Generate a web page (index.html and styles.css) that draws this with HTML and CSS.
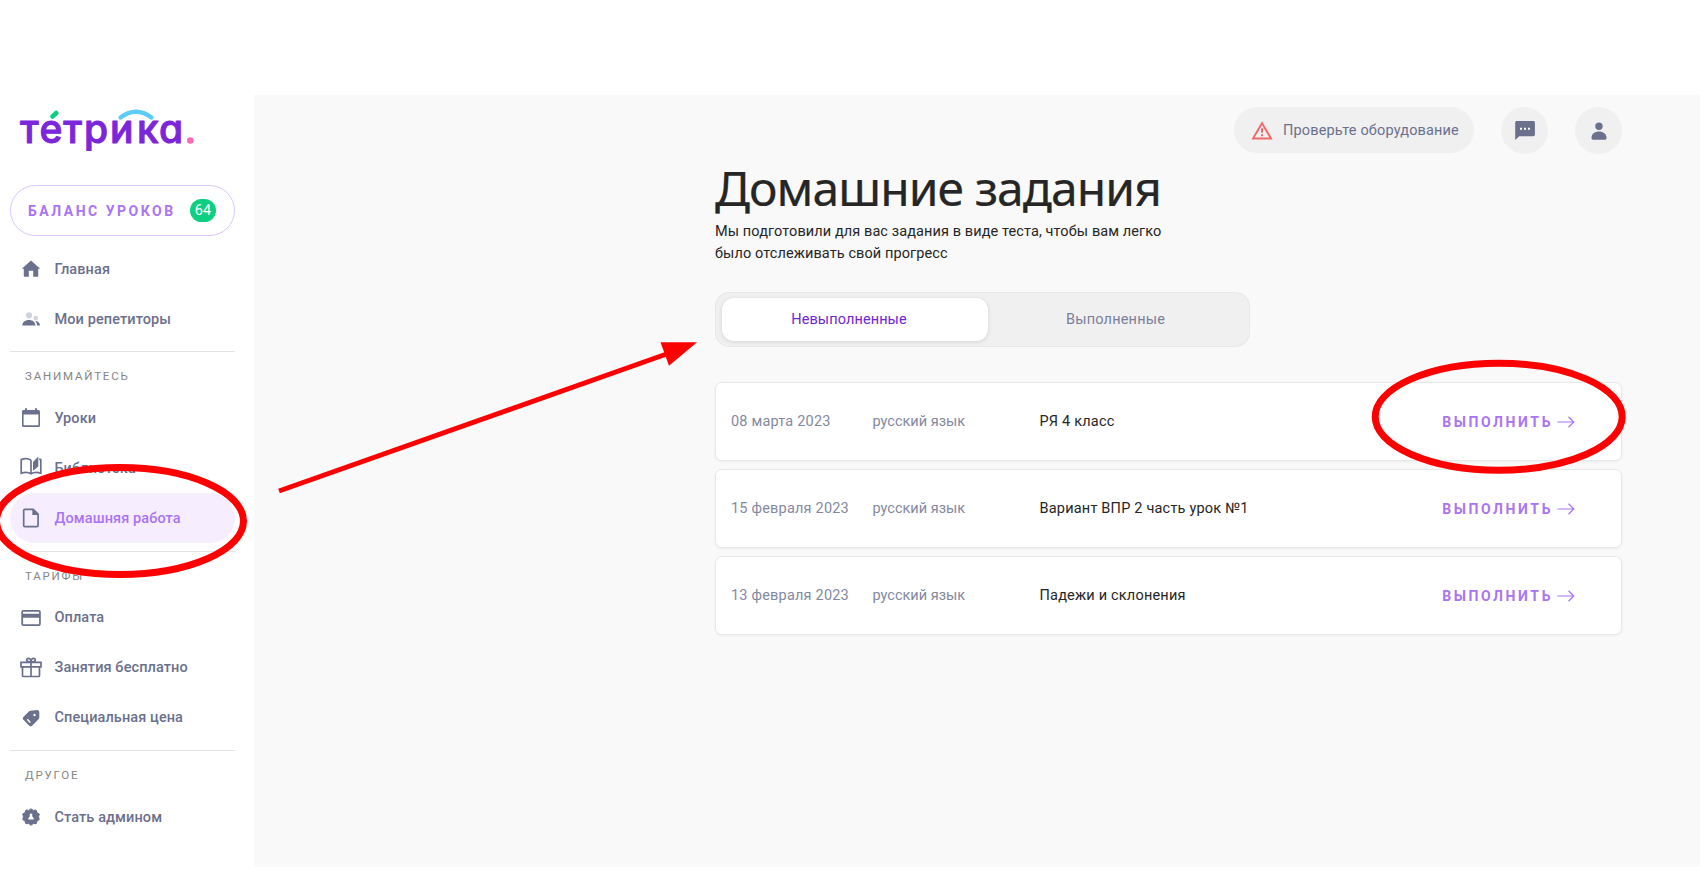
FILE: index.html
```html
<!DOCTYPE html>
<html lang="ru">
<head>
  <meta charset="UTF-8">
  <title>Домашние задания</title>
  <link rel="stylesheet" href="styles.css">
</head>
<body>
  <div class="layout">
    <aside class="sidebar">
      <a class="logo" href="#">
        <svg width="180" height="50" viewBox="0 0 180 50">
          <text class="logo-text" x="0 19.500 43.300 64 90 117 139" y="38">тетрика</text>
          <path d="M32.500 11.500l3.800-3.500" stroke="#0ccf82" stroke-width="4.600"/>
          <path d="M100.500 12.500q15.500-11.500 31 0" stroke="#5bcbf8" stroke-width="4.200"/>
          <circle cx="170.300" cy="35.500" r="3.300" fill="#ff68b7"/>
        </svg>
      </a>

      <a class="balance" href="#">
        <span class="balance-text">Баланс уроков</span>
        <span class="badge">64</span>
      </a>

      <nav>
        <a class="item" href="#">
          <svg class="icon" viewBox="0 0 24 24"><path d="M12 3.500L21.200 11.700h-2v7.200a.8.8 0 0 1-.8.8h-4.200v-6H9.800v6H5.600a.8.8 0 0 1-.8-.8v-7.200h-2z"/></svg>
          <span>Главная</span>
        </a>
        <a class="item" href="#">
          <svg class="icon" viewBox="0 0 24 24"><g opacity=".3"><circle cx="10" cy="8.300" r="3.100"/><circle cx="16.700" cy="11" r="2.300"/></g><path d="M3.300 18.500c0-3.500 3-5.600 6.600-5.600s6.600 2.100 6.600 5.600zM16 13.800c3 .2 4.900 2 5 4.700h-3c0-2-.6-3.500-2-4.700z"/></svg>
          <span>Мои репетиторы</span>
        </a>

        <div class="section">
          <div class="heading">Занимайтесь</div>
          <a class="item" href="#">
            <svg class="icon" viewBox="0 0 24 24"><path d="M6 2.300h2v1.600h8V2.300h2v1.600h1.500a1.500 1.500 0 0 1 1.500 1.500v14a1.500 1.500 0 0 1-1.500 1.500h-15A1.500 1.500 0 0 1 3 19.400v-14a1.500 1.500 0 0 1 1.500-1.500H6zM4.600 8.400v10.900h14.800V8.400z"/></svg>
            <span>Уроки</span>
          </a>
          <a class="item" href="#">
            <svg class="icon line book" viewBox="0 0 24 24"><path d="M12 5.200C9.500 3.400 5.500 3.200 2.200 4.600v13.700c3.300-1.300 7.200-1.200 9.800.5 2.600-1.700 6.500-1.800 9.800-.5V4.600l-1.600-.5M12 5.200v13.600"/><path class="solid" d="M14 7.100l5.300-5.600v10L14 15.800z"/></svg>
            <span>Библиотека</span>
          </a>
          <a class="item active" href="#">
            <svg class="icon line" viewBox="0 0 24 24"><path d="M5.900 3.300h8.300l4.900 4.900v11.300c0 .7-.5 1.200-1.200 1.200h-12c-.7 0-1.200-.5-1.200-1.200v-15c0-.7.5-1.200 1.200-1.200z"/><path class="solid" d="M13.300 3v6h6z"/></svg>
            <span>Домашняя работа</span>
          </a>
        </div>

        <div class="section">
          <div class="heading">Тарифы</div>
          <a class="item" href="#">
            <svg class="icon" viewBox="0 0 24 24"><path d="M4.300 4h15.500a2 2 0 0 1 2 2v12a2 2 0 0 1-2 2H4.300a2 2 0 0 1-2-2V6a2 2 0 0 1 2-2zm-.2 1.700v2.100h16V5.700zm0 6v6.600h16v-6.600z"/></svg>
            <span>Оплата</span>
          </a>
          <a class="item" href="#">
            <svg class="icon line" viewBox="0 0 24 24"><path d="M2 6.300h20v4.500H2zM3.500 10.800v8.700c0 .6.400 1 1 1h15c.6 0 1-.4 1-1v-8.700M12 6.300v14.200M12 6C9.500 6 7.700 5.300 7.700 4c0-1.100.7-1.700 1.600-1.700C11 2.300 12 4 12 6zM12 6c2.500 0 4.300-.7 4.300-2 0-1.100-.7-1.700-1.600-1.700C13 2.300 12 4 12 6z"/></svg>
            <span>Занятия бесплатно</span>
          </a>
          <a class="item" href="#">
            <svg class="icon" viewBox="0 0 24 24"><path d="M11.400 4.700l6.700-.6c1.300 0 2.200.8 2.200 2.100v5.300c0 .6-.2 1.100-.6 1.500l-6.600 6.700c-.8.800-2 .8-2.800 0l-5.900-5.900c-.8-.8-.8-2 0-2.800l5.500-5.600c.4-.4.900-.7 1.500-.7z"/><circle cx="15.500" cy="9" r="1.200" fill="#fff"/><path d="M8.300 13.200l3 3.200" stroke="#fff" stroke-width="1.500"/></svg>
            <span>Специальная цена</span>
          </a>
        </div>

        <div class="section">
          <div class="heading">Другое</div>
          <a class="item" href="#">
            <svg class="icon" viewBox="0 0 24 24"><path d="M12 3.800l2.300 1.600 2.700-.4.900 2.600 2.400 1.400-.8 2.900.8 2.600-2.300 1.500-.8 2.700-2.900-.2L12 20.300l-2.300-1.800-2.900.2-.8-2.700-2.300-1.500.8-2.600-.8-2.900 2.400-1.400L7 5l2.700.4z" stroke="#6b708d" stroke-linejoin="round"/><path d="M12 8.500a1.400 1.400 0 0 1 1 2.400l1.700 2.400v1.300H9.300v-1.300l1.700-2.400a1.400 1.400 0 0 1 1-2.400z" fill="#fff"/></svg>
            <span>Стать админом</span>
          </a>
        </div>
      </nav>
    </aside>

    <main class="main">
      <header class="topbar">
        <a class="check" href="#">
          <svg class="warn" width="22" height="22" viewBox="0 0 22 22"><path d="M11 4.200L20 19.500H2z" fill="none" stroke="#ee6a6a" stroke-width="1.900"/><path d="M11 9.200v4.600M11 15.300v2" stroke="#ee6a6a" stroke-width="2"/></svg>
          <span>Проверьте оборудование</span>
        </a>
        <a class="round" href="#">
          <svg class="icon" viewBox="0 0 24 24"><path d="M3.700 2h16.600c1 0 1.600.6 1.600 1.600v12c0 1-.6 1.600-1.600 1.600H6.200L2.200 21V3.600C2.200 2.600 2.800 2 3.700 2z"/><path d="M7 8.800h2v2H7zM11 8.800h2v2h-2zM15 8.800h2v2h-2z" fill="#fff"/></svg>
        </a>
        <a class="round" href="#">
          <svg class="icon" viewBox="0 0 24 24"><circle cx="12" cy="7.200" r="3.700"/><path d="M4.500 19.100c0-4.300 3.300-6.600 7.500-6.600s7.500 2.300 7.500 6.600c0 1-.6 1.700-1.500 1.700H6c-.9 0-1.500-.7-1.500-1.700z"/></svg>
        </a>
      </header>

      <div class="content">
        <h1>Домашние задания</h1>
        <p class="lead">Мы подготовили для вас задания в виде теста, чтобы вам легко<br>было отслеживать свой прогресс</p>

        <div class="tabs">
          <button class="tab tab-active"><span>Невыполненные</span></button>
          <button class="tab"><span>Выполненные</span></button>
        </div>

        <div class="cards">
          <div class="card">
            <span class="date">08 марта 2023</span>
            <span class="subject">русский язык</span>
            <span class="name">РЯ 4 класс</span>
            <a class="do" href="#"><span>Выполнить</span><svg width="18" height="14" viewBox="0 0 18 14"><path d="M.5 7h16M11.500 1.800L16.800 7l-5.300 5.200"/></svg></a>
          </div>
          <div class="card">
            <span class="date">15 февраля 2023</span>
            <span class="subject">русский язык</span>
            <span class="name">Вариант ВПР 2 часть урок №1</span>
            <a class="do" href="#"><span>Выполнить</span><svg width="18" height="14" viewBox="0 0 18 14"><path d="M.5 7h16M11.500 1.800L16.800 7l-5.300 5.200"/></svg></a>
          </div>
          <div class="card">
            <span class="date">13 февраля 2023</span>
            <span class="subject">русский язык</span>
            <span class="name">Падежи и склонения</span>
            <a class="do" href="#"><span>Выполнить</span><svg width="18" height="14" viewBox="0 0 18 14"><path d="M.5 7h16M11.500 1.800L16.800 7l-5.300 5.200"/></svg></a>
          </div>
        </div>
      </div>
    </main>
  </div>

  <!-- пометки поверх страницы -->
  <svg class="marks" width="1700" height="879" viewBox="0 0 1700 879">
    <ellipse cx="120" cy="521" rx="123.500" ry="53.500"/>
    <ellipse cx="1498.700" cy="416.700" rx="123.500" ry="53.500"/>
    <path class="shaft" d="M279 491L668 353.500"/>
    <path class="head" d="M660.500 342.300H697L669 365.700z"/>
  </svg>
</body>
</html>
```
FILE: styles.css
```css
* {
  box-sizing: border-box;
}
body {
  margin: 0;
  padding: 95px 0 12px;
  height: 879px;
  overflow: hidden;
  background: #fff;
  font-family: Roboto, "Noto Sans", sans-serif;
  font-size: 14.5px;
  letter-spacing: 0.1px;
  color: #262626;
}
a {
  color: inherit;
  text-decoration: none;
}
.layout {
  display: flex;
  height: 772px;
}
.sidebar {
  width: 254px;
  padding: 0 19px 0 10px;
  background: #fff;
}
.logo {
  display: block;
  height: 90px;
  padding: 10px 0 0 10px;
}
.logo svg {
  display: block;
  overflow: visible;
  fill: none;
  stroke-linecap: round;
}
.logo-text {
  font-family: Inter, sans-serif;
  font-size: 39px;
  font-weight: 500;
  font-feature-settings: "cv11";
  letter-spacing: 0;
  fill: #7b26db;
  stroke: #7b26db;
  stroke-width: 1;
  stroke-linejoin: round;
}
.balance {
  display: flex;
  align-items: center;
  justify-content: space-between;
  height: 51px;
  padding: 0 18px 0 17px;
  border: 1px solid #dcc6fb;
  border-radius: 26px;
  color: #a974f5;
}
.balance-text {
  font-size: 14px;
  font-weight: 700;
  text-transform: uppercase;
  letter-spacing: 2.5px;
}
.badge {
  width: 26px;
  height: 23px;
  border-radius: 12px;
  background: #0ccf82;
  color: #fff;
  font-size: 14.5px;
  line-height: 23px;
  text-align: center;
}
nav {
  padding-top: 8px;
  color: #6b708d;
}
.item {
  display: flex;
  align-items: center;
  gap: 11.5px;
  height: 50px;
  padding-left: 9px;
  border-radius: 25px;
  font-weight: 500;
}
.icon {
  width: 24px;
  height: 24px;
  flex: none;
  fill: #6b708d;
}
.line {
  fill: none;
  stroke: #6b708d;
  stroke-width: 1.7;
}
.book {
  margin-top: -2px;
}
.solid {
  fill: #6b708d;
  stroke: none;
}
.active {
  background: #f6edfe;
  color: #a974f5;
}
.section {
  margin-top: 7px;
  border-top: 1px solid #e2e2e4;
}
.section + .section {
  margin-top: 7.5px;
}
.heading {
  height: 41px;
  padding: 4px 0 0 15px;
  font-size: 11.5px;
  line-height: 41px;
  text-transform: uppercase;
  letter-spacing: 1.8px;
  color: #858585;
}
.main {
  flex: 1;
  background: #f9f9f9;
}
.topbar {
  display: flex;
  justify-content: flex-end;
  gap: 27px;
  padding: 12px 78px 0 0;
  color: #6b708d;
}
.check {
  display: flex;
  align-items: center;
  gap: 10px;
  width: 240px;
  height: 46px;
  padding-left: 17px;
  border-radius: 23px;
  background: #f0f0f0;
  letter-spacing: 0.15px;
  white-space: nowrap;
}
.round {
  display: flex;
  align-items: center;
  justify-content: center;
  width: 47px;
  height: 47px;
  border-radius: 50%;
  background: #f0f0f0;
}
.content {
  width: 907px;
  margin-left: 461px;
}
h1 {
  margin: 0;
  padding-top: 1px;
  font-family: "Noto Sans", sans-serif;
  font-size: 48px;
  line-height: 66px;
  font-weight: 400;
  letter-spacing: -0.95px;
  -webkit-text-stroke: 0.2px #262626;
  white-space: nowrap;
}
.lead {
  margin: 0;
  line-height: 22px;
}
.tabs {
  display: flex;
  width: 535px;
  height: 55px;
  margin-top: 27px;
  padding: 5px 6px;
  border: 1px solid #e8e8e8;
  border-radius: 14px;
  background: #f0f0f0;
}
.tab {
  flex: 1;
  height: 43px;
  padding: 0;
  border: none;
  border-radius: 12px;
  background: none;
  font: inherit;
  letter-spacing: 0.2px;
  color: #7a7f9a;
}
.tab-active {
  flex: 0 0 266px;
  padding-right: 12px;
  background: #fff;
  box-shadow: 0 1px 4px rgba(0, 0, 0, 0.12);
  letter-spacing: 0.1px;
  color: #7126cf;
}
.cards {
  display: flex;
  flex-direction: column;
  gap: 8px;
  margin-top: 35px;
}
.card {
  display: grid;
  grid-template-columns: 141.5px 167px 1fr auto;
  align-items: center;
  height: 79px;
  padding: 0 46px 0 15px;
  border: 1px solid #e8e8e8;
  border-radius: 7px;
  background: #fff;
  box-shadow: 0 1px 3px rgba(0, 0, 0, 0.05);
  letter-spacing: 0.2px;
}
.date,
.subject {
  color: #8489a1;
}
.subject {
  letter-spacing: 0;
}
.do {
  display: flex;
  align-items: center;
  gap: 4px;
  font-size: 14px;
  font-weight: 700;
  text-transform: uppercase;
  letter-spacing: 2.6px;
  color: #a974f5;
}
.do svg {
  fill: none;
  stroke: #a974f5;
  stroke-width: 1.2;
}
.marks {
  position: absolute;
  left: 0;
  top: 0;
  pointer-events: none;
  fill: none;
  stroke: #f00;
  stroke-width: 7;
}
.shaft {
  stroke-width: 5;
}
.head {
  fill: #f00;
  stroke: none;
}
```
